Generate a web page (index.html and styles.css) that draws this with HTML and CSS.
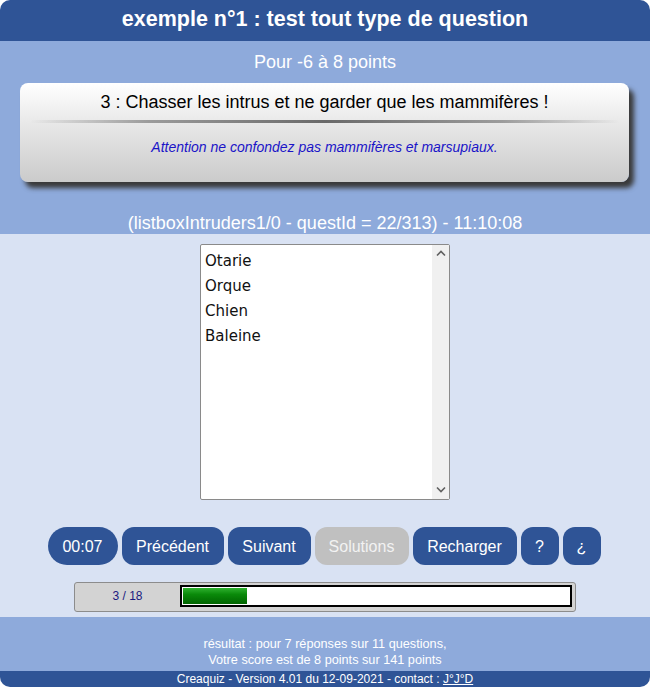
FILE: index.html
```html
<!DOCTYPE html>
<html lang="fr">
<head>
<meta charset="utf-8">
<title>Creaquiz</title>
<link rel="stylesheet" href="styles.css">
</head>
<body>
<div class="page">
  <header class="top">exemple n°1 : test tout type de question</header>
  <section class="zone-q">
    <div class="points">Pour -6 à 8 points</div>
    <div class="card">
      <div class="card-title">3 : Chasser les intrus et ne garder que les mammifères !</div>
      <div class="sep"></div>
      <div class="card-note">Attention ne confondez pas mammifères et marsupiaux.</div>
    </div>
    <div class="qid">(listboxIntruders1/0 - questId = 22/313) - 11:10:08</div>
  </section>
  <section class="zone-a">
    <div class="listbox">
      <ul class="items">
        <li>Otarie</li>
        <li>Orque</li>
        <li>Chien</li>
        <li>Baleine</li>
      </ul>
      <div class="scroll">
        <svg class="arrow" width="10" height="7" viewBox="0 0 10 7"><path d="M1 5.5 L5 1.5 L9 5.5" fill="none" stroke="#606060" stroke-width="1.6"/></svg>
        <svg class="arrow" width="10" height="7" viewBox="0 0 10 7"><path d="M1 1.5 L5 5.5 L9 1.5" fill="none" stroke="#606060" stroke-width="1.6"/></svg>
      </div>
    </div>
    <div class="buttons">
      <span class="btn pill">00:07</span>
      <span class="btn w-prev">Précédent</span>
      <span class="btn w-next">Suivant</span>
      <span class="btn disabled w-sol">Solutions</span>
      <span class="btn w-rel">Recharger</span>
      <span class="btn w-q">?</span>
      <span class="btn w-q">¿</span>
    </div>
    <div class="progress">
      <span class="count">3 / 18</span>
      <div class="track"><div class="fill" style="width:16.5%"></div></div>
    </div>
  </section>
  <section class="zone-r">
    <div>résultat : pour 7 réponses sur 11 questions,</div>
    <div>Votre score est de 8 points sur 141 points</div>
  </section>
  <footer class="bottom">Creaquiz - Version 4.01 du 12-09-2021 - contact : <a href="#">J°J°D</a></footer>
</div>
</body>
</html>
```

FILE: styles.css
```css
* { box-sizing: border-box; }
html, body { margin: 0; padding: 0; background: #ffffff; }
body { font-family: "Liberation Sans", Arial, sans-serif; }
.page {
  width: 650px;
  height: 687px;
  display: flex;
  flex-direction: column;
  border-radius: 10px;
  overflow: hidden;
}
.top {
  background: #2f5496;
  color: #fff;
  font-weight: bold;
  font-size: 21.5px;
  height: 41px;
  line-height: 38px;
  text-align: center;
}
.zone-q {
  background: #8eaadb;
  height: 193px;
  display: flex;
  flex-direction: column;
  align-items: stretch;
}
.points {
  color: #fff;
  font-size: 18px;
  text-align: center;
  margin-top: 11px;
  line-height: 20px;
}
.card {
  margin: 11px 21px 0 20px;
  height: 99px;
  border-radius: 8px;
  background: linear-gradient(#ffffff 0%, #e6e6e6 45%, #cbcbcb 100%);
  box-shadow: 5px 6px 5px #3a3a3a;
  display: flex;
  flex-direction: column;
  align-items: center;
}
.card-title {
  font-size: 18px;
  color: #000;
  margin-top: 9px;
  line-height: 20px;
}
.sep {
  width: 590px;
  height: 3px;
  margin-top: 8px;
  background: linear-gradient(90deg, rgba(120,120,120,0) 0%, #7a7a7a 20%, #333 50%, #7a7a7a 80%, rgba(120,120,120,0) 100%);
  opacity: 0.7;
  border-radius: 2px;
}
.card-note {
  color: #1a14c8;
  font-style: italic;
  font-size: 14px;
  margin-top: 16px;
}
.qid {
  color: #fff;
  font-size: 18px;
  text-align: center;
  margin-top: 31px;
  line-height: 20px;
}
.zone-a {
  background: #d9e2f3;
  height: 383px;
  display: flex;
  flex-direction: column;
  align-items: center;
}
.listbox {
  margin-top: 10px;
  width: 250px;
  height: 256px;
  background: #fff;
  border: 1px solid #8a8a8a;
  border-radius: 2px;
  display: flex;
}
.items {
  list-style: none;
  margin: 0;
  padding: 4px 0 0 4px;
  flex: 1;
  font-family: "DejaVu Sans", Verdana, sans-serif;
  font-size: 15px;
  color: #111;
}
.items li { height: 25px; line-height: 25px; }
.scroll {
  width: 17px;
  background: #f0f0f0;
  display: flex;
  flex-direction: column;
  justify-content: space-between;
  align-items: center;
  padding: 5px 0 6px;
}
.buttons {
  display: flex;
  gap: 4px;
  margin-top: 27px;
  margin-left: -2px;
}
.btn {
  background: #2f5496;
  color: #fff;
  font-size: 16px;
  height: 38px;
  line-height: 39px;
  border-radius: 12px;
  text-align: center;
  display: inline-block;
}
.pill { border-radius: 19px; width: 70px; }
.w-prev { width: 102px; }
.w-next { width: 83px; }
.w-sol { width: 94px; }
.w-rel { width: 104px; }
.w-q { width: 38px; }
.disabled { background: #c0c0c0; color: #f2f2f2; }
.progress {
  margin-top: 17px;
  width: 502px;
  height: 30px;
  background: #d3d3d3;
  border: 1px solid #8c8c8c;
  border-radius: 3px;
  display: flex;
  align-items: center;
  padding: 0 3px 0 0;
}
.count {
  width: 105px;
  text-align: center;
  color: #1a1a80;
  font-size: 12px;
  margin-bottom: 3px;
}
.track {
  flex: 1;
  height: 22px;
  background: #fff;
  border: 2px solid #000;
  margin-bottom: 2px;
  padding: 1px;
}
.fill {
  height: 100%;
  background: linear-gradient(#2fb12f 0%, #0a8a0a 40%, #006400 100%);
}
.zone-r {
  background: #8eaadb;
  height: 54px;
  color: #fff;
  font-size: 12.7px;
  text-align: center;
  padding-top: 19px;
  line-height: 16px;
}
.bottom {
  background: #2f5496;
  color: #fff;
  font-size: 12px;
  text-align: center;
  height: 16px;
  line-height: 16px;
}
.bottom a { color: #fff; }
```
